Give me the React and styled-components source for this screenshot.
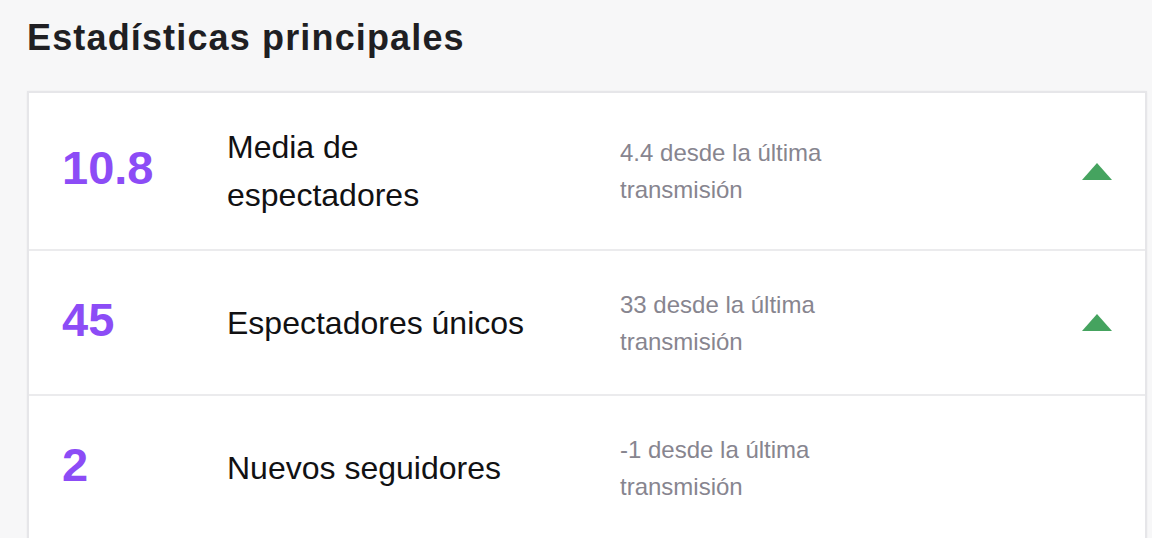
import styled, { createGlobalStyle } from "styled-components";

const GlobalStyle = createGlobalStyle`
  html, body {
    margin: 0;
    padding: 0;
    background: #f7f7f8;
  }
  body {
    font-family: "Liberation Sans", Arial, sans-serif;
    -webkit-font-smoothing: antialiased;
  }
`;

const stats = [
  {
    value: "10.8",
    label: "Media de espectadores",
    labelWidth: "260px",
    change: "4.4 desde la última transmisión",
    up: true,
  },
  {
    value: "45",
    label: "Espectadores únicos",
    change: "33 desde la última transmisión",
    up: true,
  },
  {
    value: "2",
    label: "Nuevos seguidores",
    change: "-1 desde la última transmisión",
    up: false,
  },
];

function UpArrow() {
  return (
    <svg width="30" height="17" viewBox="0 0 30 17">
      <polygon points="15,0 30,17 0,17" fill="#45a35f" />
    </svg>
  );
}

export default function App() {
  return (
    <>
      <GlobalStyle />
      <Page>
        <Title>Estadísticas principales</Title>
        <Card>
          {stats.map((s) => (
            <Row key={s.label}>
              <Value>{s.value}</Value>
              <Label width={s.labelWidth}>{s.label}</Label>
              <Change>{s.change}</Change>
              <Trend>{s.up && <UpArrow />}</Trend>
            </Row>
          ))}
        </Card>
      </Page>
    </>
  );
}

const Page = styled.main`
  padding: 17px 5px 0 27px;
  display: flex;
  flex-direction: column;
`;

const Title = styled.h1`
  margin: 0 0 32px 0;
  font-size: 36px;
  line-height: 42px;
  font-weight: 700;
  letter-spacing: 1.15px;
  color: #1f1f23;
`;

const Card = styled.section`
  background: #ffffff;
  border: 2px solid #e6e6e9;
  border-bottom: none;
  box-shadow: 0 0 2px rgba(0, 0, 0, 0.05);
  display: flex;
  flex-direction: column;
`;

const Row = styled.div`
  box-sizing: border-box;
  min-height: 145px;
  padding: 30px 33px;
  display: grid;
  grid-template-columns: 165px 393px 1fr 30px;
  align-items: center;
  border-bottom: 2px solid #ebebed;
`;

const Value = styled.div`
  font-size: 47px;
  line-height: 1;
  font-weight: 700;
  color: #8c4cf6;
  padding-bottom: 7px;
`;

const Label = styled.div`
  font-size: 32px;
  line-height: 48px;
  color: #111113;
  max-width: ${(props) => props.width || "none"};
`;

const Change = styled.div`
  font-size: 24px;
  line-height: 37px;
  color: #87858f;
  padding: 3px 0;
  max-width: 240px;
`;

const Trend = styled.div`
  display: flex;
  align-items: center;
  justify-content: center;
  height: 17px;
`;
